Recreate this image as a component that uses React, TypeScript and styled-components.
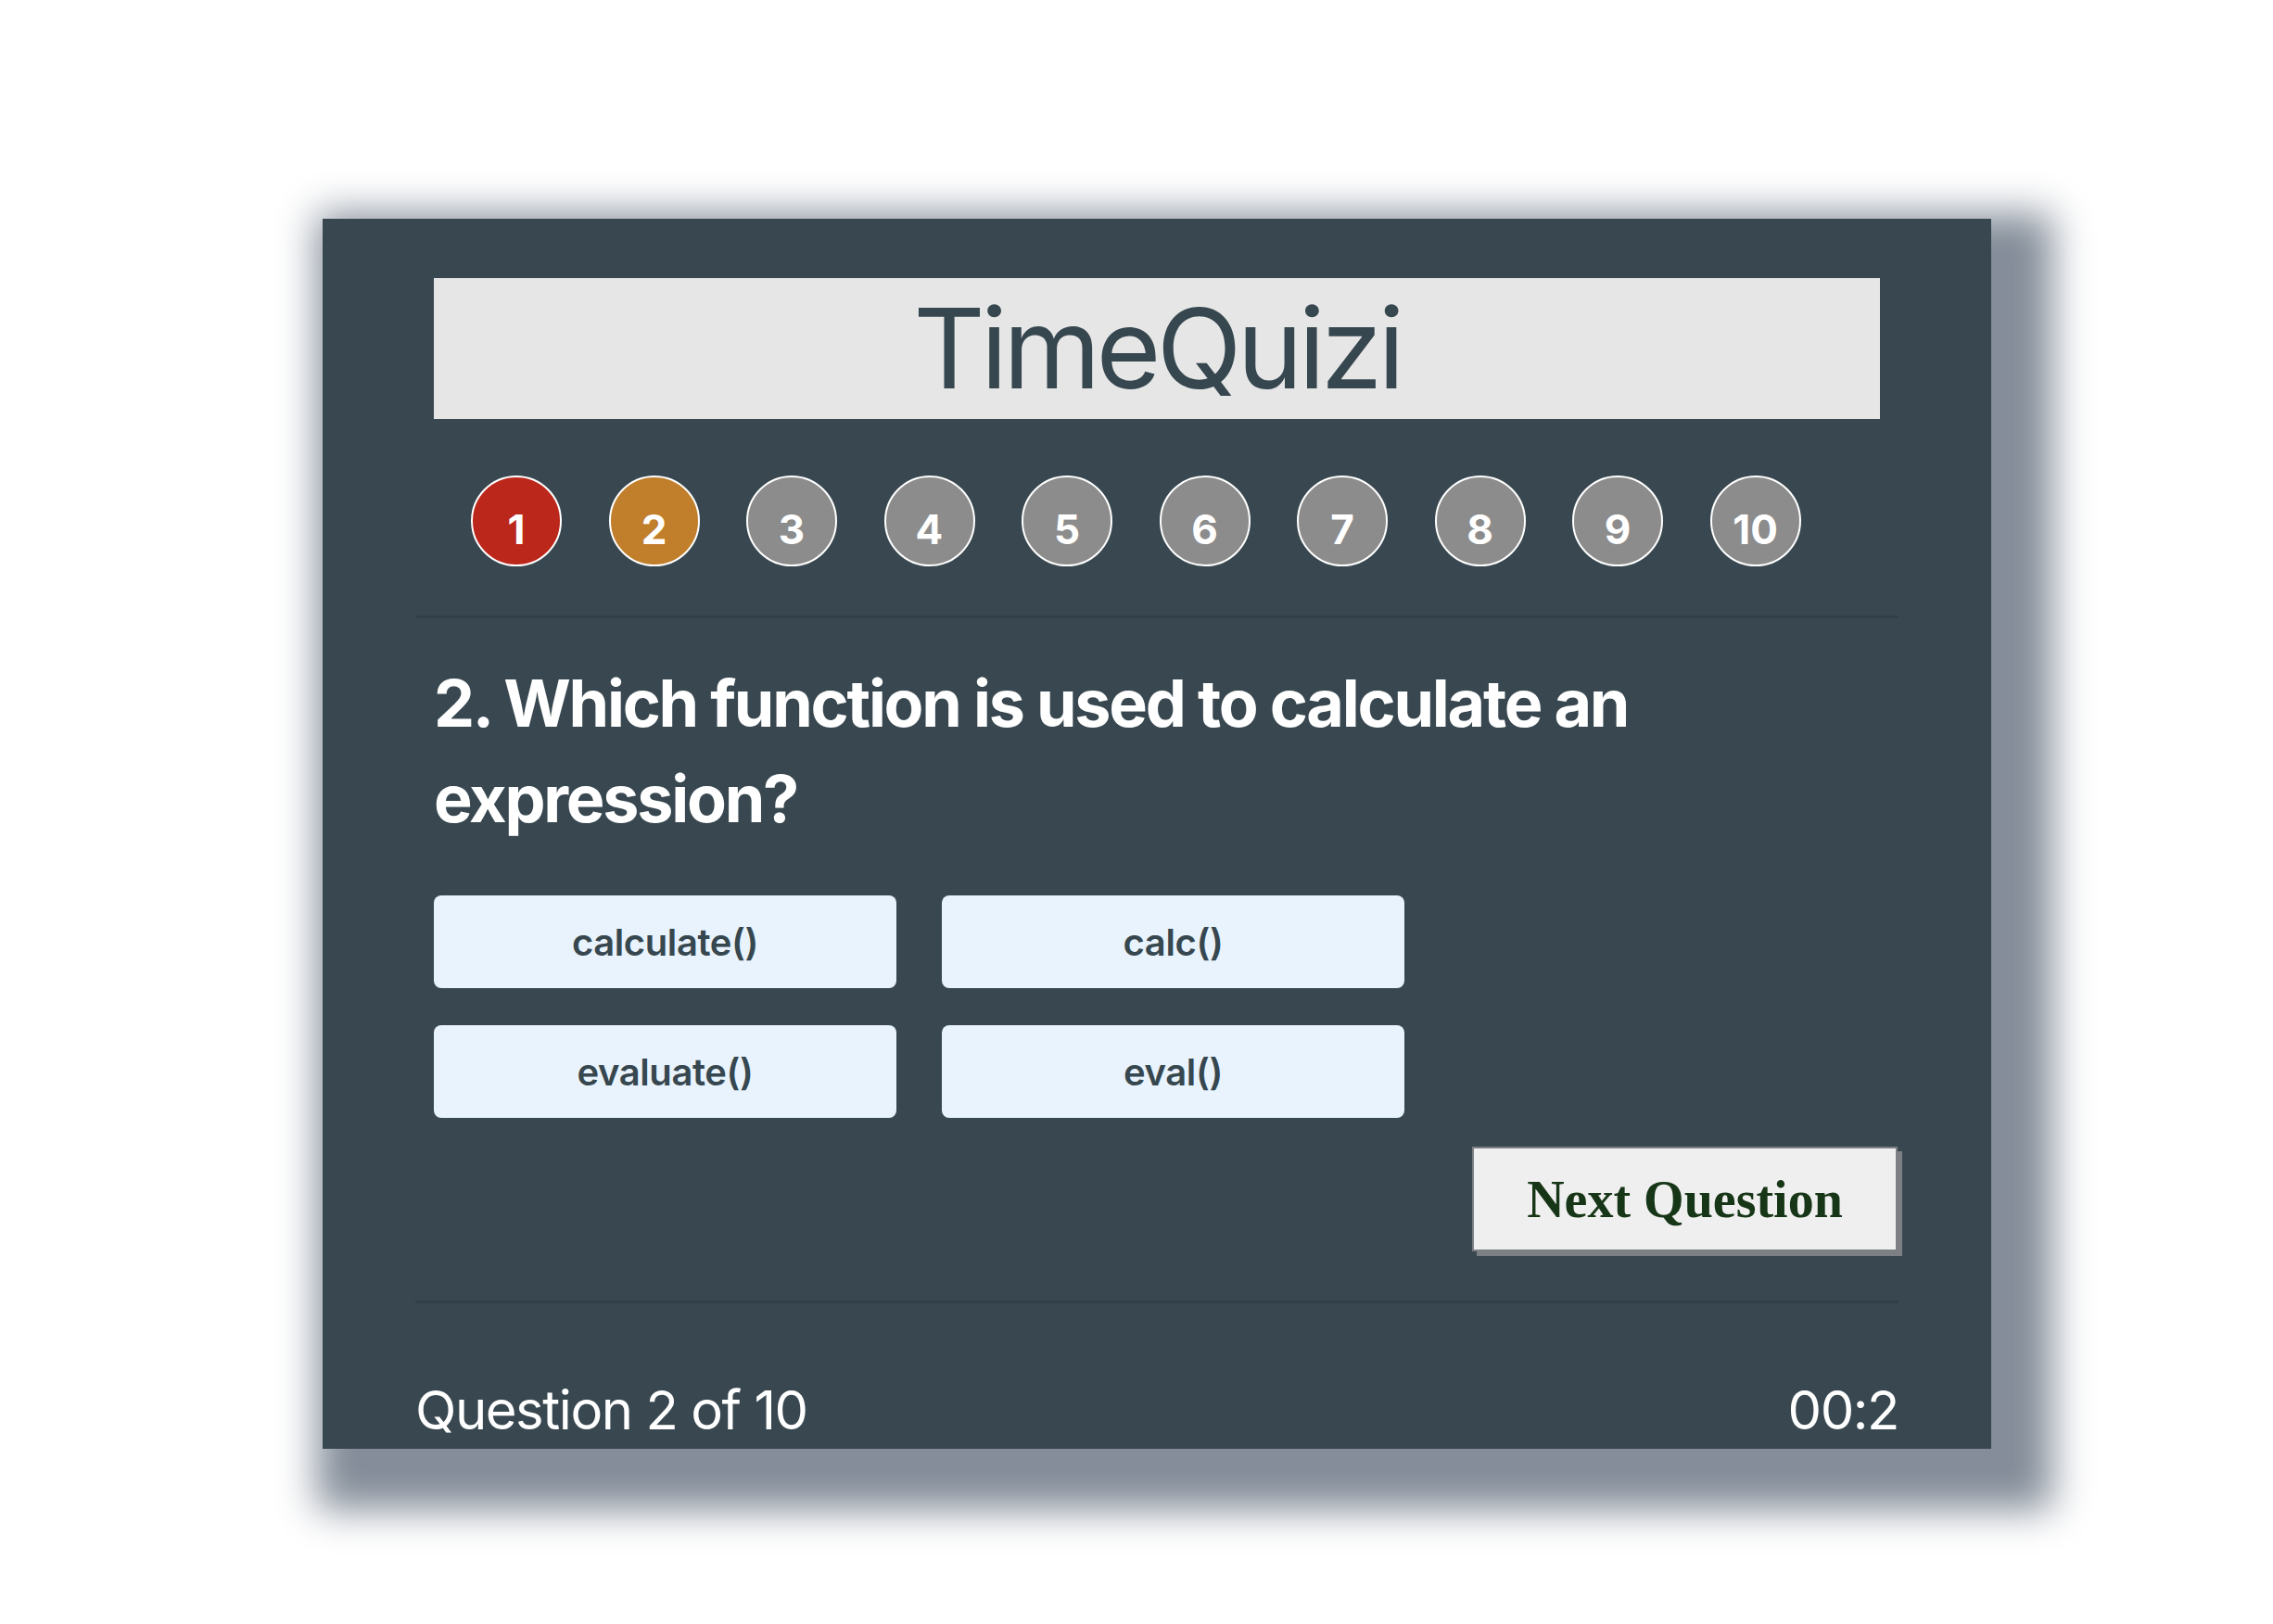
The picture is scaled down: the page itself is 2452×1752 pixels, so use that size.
import styled, { createGlobalStyle } from "styled-components";

const GlobalStyle = createGlobalStyle`
  html, body {
    margin: 0;
    padding: 0;
    background: #ffffff;
  }
  * {
    box-sizing: border-box;
  }
`;

const Page = styled.div`
  min-height: 100vh;
  padding: 236px 0 0 348px;
  font-family: Inter, "Noto Sans", sans-serif;
`;

const Card = styled.div`
  width: 1800px;
  height: 1327px;
  padding: 64px 100px 0 100px;
  background: #394850;
  box-shadow: 30px 30px 40px 36px #848d99;
`;

const Header = styled.div`
  height: 152px;
  margin: 0 20px;
  background: #e6e6e6;
  color: #37474f;
  display: flex;
  align-items: center;
  justify-content: center;
  font-size: 120px;
  font-weight: 400;
  letter-spacing: -0.04em;
  line-height: 152px;
`;

const Steps = styled.div`
  display: flex;
  gap: 50.5px;
  margin-top: 61px;
  padding-left: 60px;
`;

const Step = styled.div<{ $state: "wrong" | "current" | "todo" }>`
  width: 98px;
  height: 98px;
  border-radius: 50%;
  border: 2px solid #ffffff;
  display: flex;
  align-items: center;
  justify-content: center;
  padding-top: 18px;
  color: #ffffff;
  font-size: 44px;
  font-weight: 700;
  background: ${({ $state }) =>
    $state === "wrong" ? "#bc271b" : $state === "current" ? "#c17e2b" : "#8c8c8c"};
`;

const Divider = styled.hr<{ $top: number }>`
  margin: ${({ $top }) => $top}px 0 0 0;
  border: none;
  height: 3px;
  background: #323f47;
`;

const Question = styled.h2`
  margin: 40px 20px 0 20px;
  color: #ffffff;
  font-size: 70px;
  font-weight: 700;
  line-height: 103px;
  letter-spacing: -0.032em;
`;

const Answers = styled.div`
  display: grid;
  grid-template-columns: 499px 499px;
  column-gap: 49px;
  row-gap: 40px;
  margin: 53px 20px 0 20px;
`;

const Answer = styled.button`
  height: 100px;
  border: none;
  border-radius: 8px;
  background: #e8f3fd;
  color: #37474f;
  font-family: Inter, "Noto Sans", sans-serif;
  font-size: 40px;
  font-weight: 600;
  letter-spacing: -0.01em;
  cursor: pointer;
`;

const Actions = styled.div`
  display: flex;
  justify-content: flex-end;
  margin-top: 31px;
`;

const NextButton = styled.button`
  width: 459px;
  height: 113px;
  margin-right: 1px;
  border: 2px solid #7c7f83;
  box-shadow: 5px 5px 0 #7c7f83;
  background: #efefef;
  color: #173617;
  font-family: "Liberation Serif", "Times New Roman", serif;
  font-size: 56px;
  font-weight: 700;
  cursor: pointer;
`;

const Footer = styled.div`
  display: flex;
  justify-content: space-between;
  margin-top: 80px;
  color: #ffffff;
  font-size: 58px;
  font-weight: 400;
  line-height: 70px;
  letter-spacing: -0.025em;
`;

const steps = [1, 2, 3, 4, 5, 6, 7, 8, 9, 10];
const answers = ["calculate()", "calc()", "evaluate()", "eval()"];

const App = () => {
  return (
    <>
      <GlobalStyle />
      <Page>
        <Card>
          <Header>TimeQuizi</Header>
          <Steps>
            {steps.map((n) => (
              <Step key={n} $state={n === 1 ? "wrong" : n === 2 ? "current" : "todo"}>
                {n}
              </Step>
            ))}
          </Steps>
          <Divider $top={53} />
          <Question>2. Which function is used to calculate an expression?</Question>
          <Answers>
            {answers.map((a) => (
              <Answer key={a}>{a}</Answer>
            ))}
          </Answers>
          <Actions>
            <NextButton>Next Question</NextButton>
          </Actions>
          <Divider $top={53} />
          <Footer>
            <span>Question 2 of 10</span>
            <span>00:2</span>
          </Footer>
        </Card>
      </Page>
    </>
  );
};

export default App;
